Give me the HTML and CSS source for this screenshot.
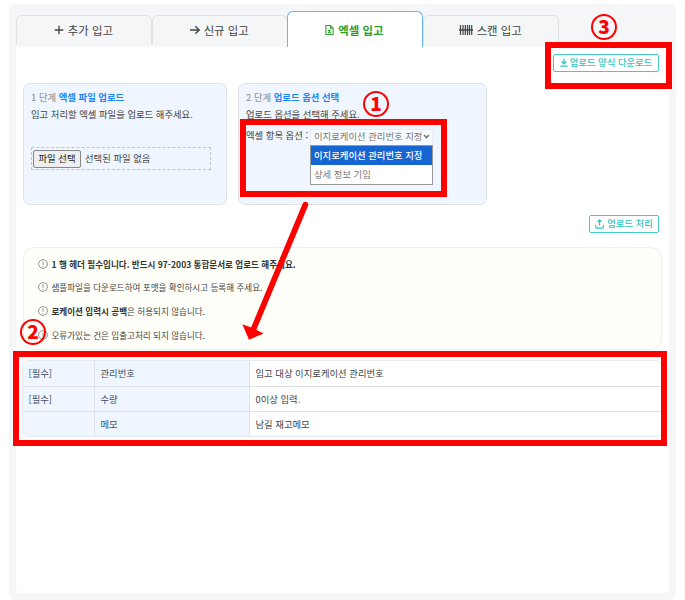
FILE: index.html
```html
<!DOCTYPE html>
<html lang="ko">
<head>
<meta charset="utf-8">
<title>엑셀 입고</title>
<link rel="stylesheet" href="styles.css">
</head>
<body>
<main class="panel">
  <nav class="tabs">
    <a class="tab"><svg class="tab-icon" viewBox="0 0 10 10"><path d="M5 .7v8.6M.7 5h8.6"/></svg>추가 입고</a>
    <a class="tab"><svg class="tab-icon" viewBox="0 0 10 10"><path d="M0 5h9M5.3 1.2 9.2 5 5.3 8.8"/></svg>신규 입고</a>
    <a class="tab active"><svg class="tab-icon file" viewBox="0 0 10 12"><path d="M1 1h5l3 3v7H1zM6 1v3h3M3.3 5.8l3 3.6M6.3 5.8l-3 3.6"/></svg>엑셀 입고</a>
    <a class="tab"><svg class="tab-icon barcode" viewBox="0 0 14 10"><path d="M1.5 0v10M4 0v10M6.3 0v10M8.5 0v10M10.5 0v10M12.7 0v10"/><path class="scan-line" d="M0 5h14"/></svg>스캔 입고</a>
  </nav>
  <section class="content">
    <div class="actions top">
      <button class="btn"><svg viewBox="0 0 8 9"><path d="M4 .5v5.2M1.6 3.5 4 5.9l2.4-2.4M.5 8.2h7"/></svg>업로드 양식 다운로드</button>
    </div>
    <div class="steps">
      <div class="card first">
        <h2><span>1 단계</span> 엑셀 파일 업로드</h2>
        <p>입고 처리할 엑셀 파일을 업로드 해주세요.</p>
        <div class="file-input"><button>파일 선택</button><span>선택된 파일 없음</span></div>
      </div>
      <div class="card second">
        <h2><span>2 단계</span> 업로드 옵션 선택</h2>
        <p>업로드 옵션을 선택해 주세요.</p>
        <div class="option-row">
          <span class="option-label">엑셀 항목 옵션 :</span>
          <div class="select">
            <div class="select-value">이지로케이션 관리번호 지정<svg viewBox="0 0 7 5"><path d="M1 1l2.5 2.5L6 1"/></svg></div>
            <ul class="menu"><li class="selected">이지로케이션 관리번호 지정</li><li>상세 정보 기입</li></ul>
          </div>
        </div>
      </div>
    </div>
    <div class="actions bottom">
      <button class="btn process"><svg viewBox="0 0 9 10"><path d="M4.5 6.5V1M2.4 3 4.5.9 6.6 3M.7 6v2.2q0 1 1 1h5.6q1 0 1-1V6"/></svg>업로드 처리</button>
    </div>
    <ul class="notice">
      <li><svg viewBox="0 0 10 10"><circle cx="5" cy="5" r="4.4"/><path d="M5 2.2v3.6M5 6.9v1"/></svg><b>1 행 헤더 필수입니다. 반드시 97-2003 통합문서로 업로드 해주세요.</b></li>
      <li><svg viewBox="0 0 10 10"><circle cx="5" cy="5" r="4.4"/><path d="M5 2.2v3.6M5 6.9v1"/></svg><span>샘플파일을 다운로드하여 포맷을 확인하시고 등록해 주세요.</span></li>
      <li><svg viewBox="0 0 10 10"><circle cx="5" cy="5" r="4.4"/><path d="M5 2.2v3.6M5 6.9v1"/></svg><span><b>로케이션 입력시 공백</b>은 허용되지 않습니다.</span></li>
      <li><svg viewBox="0 0 10 10"><circle cx="5" cy="5" r="4.4"/><path d="M5 2.2v3.6M5 6.9v1"/></svg><span>오류가있는 건은 입출고처리 되지 않습니다.</span></li>
    </ul>
    <div class="fields">
      <div class="row"><div class="key">[필수]</div><div class="key">관리번호</div><div>입고 대상 이지로케이션 관리번호</div></div>
      <div class="row"><div class="key">[필수]</div><div class="key">수량</div><div>0이상 입력.</div></div>
      <div class="row"><div class="key"></div><div class="key">메모</div><div>남길 재고메모</div></div>
    </div>
  </section>
</main>
<aside class="next-panel"></aside>
<div class="mark mark-option"></div>
<div class="mark mark-fields"></div>
<div class="mark mark-download"></div>
<svg class="arrow" viewBox="0 0 70 145"><path class="shaft" d="M65.3 4.8 14 128"/><path class="head" d="M2.3 124.3 12 127.7 23.7 133.5 9 139.7z"/></svg>
<div class="number n1">1</div>
<div class="number n2">2</div>
<div class="number n3">3</div>
</body>
</html>
```
FILE: styles.css
```css
* { box-sizing: border-box; }
body {
  margin: 0;
  width: 685px;
  height: 600px;
  position: relative;
  overflow: hidden;
  display: flex;
  justify-content: space-between;
  background: #fff;
  color: #444;
  font: 9.35px/14px "Noto Sans CJK KR", sans-serif;
}
h2, p, ul { margin: 0; padding: 0; list-style: none; }
button { font: inherit; white-space: nowrap; }
svg { fill: none; stroke: currentColor; flex: none; }

.panel {
  width: 667px;
  height: 596px;
  margin: 4px 0 0 9px;
  padding: 7px 7px 7px;
  background: #f4f6f8;
  border-radius: 7px;
}
.next-panel { width: 1px; height: 596px; margin-top: 4px; background: #f4f6f8; }

.tabs { display: flex; align-items: flex-start; height: 36px; }
.tab {
  width: 135.8px;
  height: 29px;
  margin-top: 4px;
  padding-right: 1px;
  display: flex;
  align-items: center;
  justify-content: center;
  gap: 4px;
  border: 1px solid #dfe2e5;
  border-bottom: 0;
  border-radius: 6px 6px 0 0;
  font-size: 11.4px;
  color: #444;
}
.tab.active {
  height: 36px;
  margin-top: 0;
  border-color: #6ab3f8;
  background: #fff;
  color: #2ba02f;
  font-weight: 700;
}
.tab:nth-child(3) { margin-left: -.6px; }
.tab-icon { width: 10px; height: 10px; stroke-width: 1.3; }
.tab-icon.file { width: 9px; height: 12px; stroke-width: 1.2; }
.tab-icon.barcode { width: 14px; height: 10px; stroke-width: 1.2; }
.scan-line { stroke-width: 1.5; }

.content {
  height: 546px;
  padding: 7px 7px 0 7px;
  background: #fff;
  border-radius: 0 0 5px 5px;
}
.actions { display: flex; justify-content: flex-end; padding-right: 3px; height: 18px; }
.btn {
  width: 106px;
  height: 18px;
  padding: 0 0 1px;
  display: flex;
  align-items: center;
  justify-content: center;
  gap: 2px;
  background: #fff;
  border: 1px solid #45cbc5;
  border-radius: 2px;
  color: #2fc5c0;
  font-weight: 500;
  line-height: 15px;
}
.btn svg { width: 8px; height: 9px; stroke-width: 1.2; }
.btn.process { width: 70px; gap: 3px; }
.btn.process svg { width: 9px; height: 10px; }

.steps { display: flex; gap: 11px; margin-top: 11px; }
.card {
  height: 122px;
  padding: 6px 7px;
  background: #eff6ff;
  border: 1px solid #dfe2e5;
  border-radius: 7px;
}
.card.first { width: 204px; }
.card.second { width: 249px; }
.card h2 { font-size: 9.35px; line-height: 14px; color: #1a86fa; font-weight: 700; }
.card h2 span { color: #999; font-weight: 500; }
.card p { margin-top: 3px; line-height: 15px; }
.file-input {
  width: 180px;
  height: 23px;
  margin-top: 25px;
  padding-left: 1px;
  display: flex;
  align-items: center;
  gap: 4px;
  line-height: 12px;
  border: 1px dashed #c1c5ca;
}
.file-input span { padding-bottom: 1px; }
.file-input button {
  width: 48px;
  height: 18px;
  padding: 0;
  border: 1px solid #888;
  border-radius: 2px;
  background: #efefef;
  color: #222;
  line-height: 15px;
}
.option-row { display: flex; margin-top: 6px; }
.option-label { width: 64px; white-space: nowrap; }
.select { width: 123px; margin-top: 1px; color: #777; white-space: nowrap; }
.select-value {
  height: 16px;
  padding: 0 2px 3px 3px;
  display: flex;
  align-items: center;
  justify-content: space-between;
  background: #f8fbff;
  border: 1px solid #e6ecf2;
  border-bottom: 0;
}
.select-value svg { width: 7px; height: 5px; stroke-width: 1.6; }
.menu { height: 40px; border: 1px solid #999; background: #fff; }
.menu li { height: 19px; padding-left: 3px; line-height: 19px; }
.menu .selected { background: #1765d1; color: #fff; font-weight: 500; }

.actions.bottom { margin-top: 10px; }
.notice {
  height: 103px;
  margin-top: 14px;
  padding: 4px 14px;
  background: #fffff9;
  border: 1px solid #eceeef;
  border-radius: 11px;
  font-size: 8.56px;
}
.notice li { height: 23.6px; display: flex; align-items: center; gap: 3.5px; }
.notice svg { width: 10px; height: 10px; stroke: #777; stroke-width: .8; }
.notice b { color: #333; font-weight: 700; }

.fields {
  margin: 10px 0 0 -1px;
  border: 1px solid #e8ebee;
  border-radius: 6px;
  overflow: hidden;
}
.row { display: grid; grid-template-columns: 72px 155px 1fr; height: 25px; }
.row + .row { border-top: 1px solid #dddfe1; }
.row > div { padding: 0 0 1px 5.5px; display: flex; align-items: center; }
.row .key { background: #eff6ff; border-right: 1px solid #dfe2e6; color: #435064; }

.mark { position: absolute; border: 6px solid #f00; }
.mark-option { left: 240px; top: 119px; width: 207px; height: 78px; }
.mark-fields { left: 13px; top: 351px; width: 654px; height: 95px; }
.mark-download { left: 545px; top: 42px; width: 127px; height: 47px; }
.arrow { position: absolute; left: 240px; top: 200px; width: 70px; height: 145px; }
.shaft { stroke: #f00; stroke-width: 5.8; stroke-linecap: round; }
.head { fill: #f00; stroke: none; }
.number {
  position: absolute;
  width: 26px;
  height: 26px;
  border: 2px solid #f00;
  border-radius: 50%;
  color: #f00;
  font-size: 19px;
  font-weight: 900;
  line-height: 20px;
  text-align: center;
}
.n1 { left: 363px; top: 91px; }
.n2 { left: 20px; top: 319px; }
.n3 { left: 591px; top: 14px; }
```
